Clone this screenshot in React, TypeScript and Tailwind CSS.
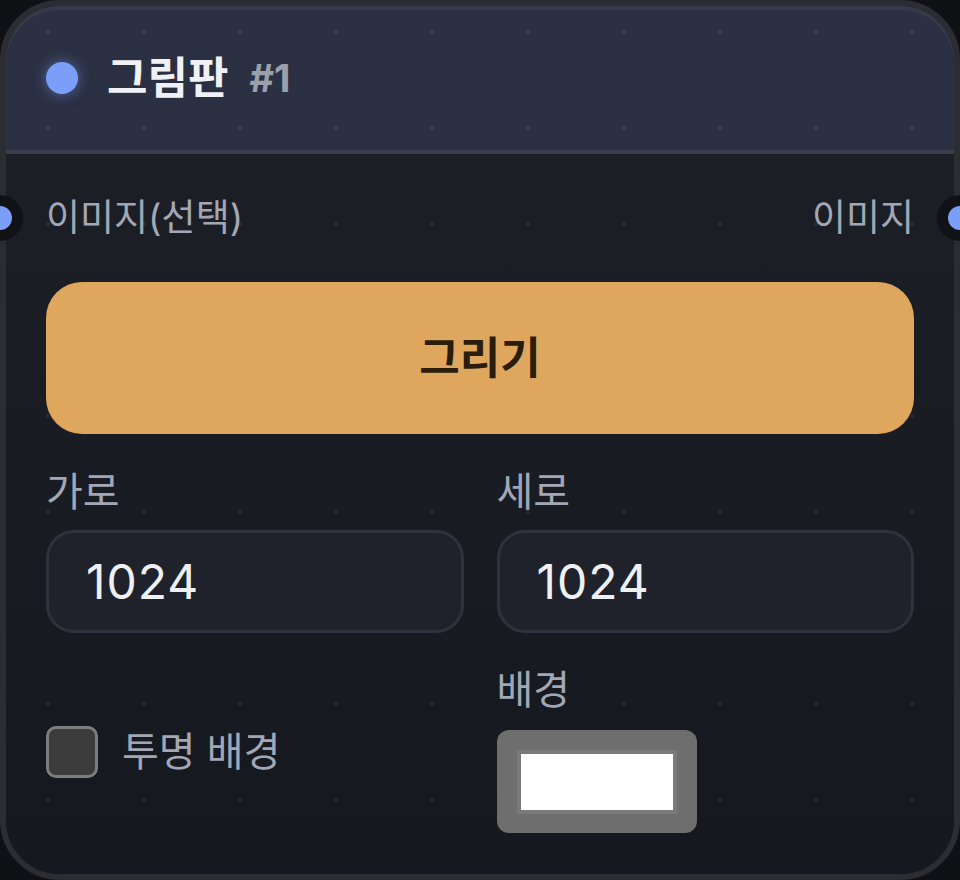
import React from 'react';

const font = "font-['Inter','Noto_Sans_CJK_KR',sans-serif]";

const Handle: React.FC<{ side: 'left' | 'right' }> = ({ side }) => (
  <div
    className={`absolute top-1/2 -translate-y-1/2 w-[46px] h-[46px] rounded-full bg-[#111216] flex items-center justify-center ${
      side === 'left' ? 'left-[-69px]' : 'right-[-69px]'
    }`}
  >
    <div className="w-[24px] h-[24px] rounded-full bg-[#7b9ef8]" />
  </div>
);

const NumberField: React.FC<{ label: string; value: string }> = ({ label, value }) => (
  <div className="flex flex-col">
    <span className="text-[40px] leading-[40px] text-[#a2a7b5]">{label}</span>
    <div className="mt-[18px] h-[103px] rounded-[28px] border-[3px] border-[#2f323c] bg-[#1f222a] flex items-center pl-[37px]">
      <span className="text-[48px] leading-none text-[#eef0f4] tracking-[1px]">{value}</span>
    </div>
  </div>
);

export default function App() {
  return (
    <div className={`w-[960px] h-[880px] bg-[#0f1013] ${font}`}>
      <div className="relative w-full h-full rounded-[60px] border-[6px] border-[#2b2d32] flex flex-col">
        {/* Header */}
        <div className="h-[148px] shrink-0 rounded-t-[54px] border-b-4 border-[#3a3d4e] shadow-[inset_0_4px_0_#363a4b] bg-fixed bg-[image:radial-gradient(circle,rgba(255,255,255,0.07)_2px,transparent_2.6px),linear-gradient(180deg,#2b3043,#282c3c)] bg-size-[96px_96px,100%_100%] bg-position-[0px_-16px,0_0] flex items-center pl-[40px]">
          <div className="w-[32px] h-[32px] rounded-full bg-[#7b9ef8] shadow-[0_0_14px_rgba(123,158,248,0.55)]" />
          <span className="ml-[29px] text-[44px] leading-none font-bold text-[#f0f1f5]">그림판</span>
          <span className="ml-[21px] text-[38px] leading-none font-bold text-[#9ca0ad]">#1</span>
        </div>

        {/* Body */}
        <div className="flex-1 rounded-b-[54px] bg-fixed bg-[image:radial-gradient(circle,rgba(255,255,255,0.06)_2px,transparent_2.6px),linear-gradient(180deg,#1e2027,#16181f)] bg-size-[96px_96px,100%_100%] bg-position-[0px_-16px,0_0] px-[40px] pt-[44px] pb-[41px] flex flex-col">
          <div className="relative flex justify-between items-center h-[40px] text-[37px] leading-[40px] text-[#a2a7b5]">
            <Handle side="left" />
            <span>이미지(선택)</span>
            <span>이미지</span>
            <Handle side="right" />
          </div>

          <button className="mt-[44px] h-[152px] rounded-[36px] bg-[#dfa75e] text-[44px] leading-none font-bold text-[#2b1d0c]">
            그리기
          </button>

          <div className="mt-[38px] grid grid-cols-2 gap-x-[33px]">
            <NumberField label="가로" value="1024" />
            <NumberField label="세로" value="1024" />
          </div>

          <div className="mt-[37px] grid grid-cols-2 gap-x-[33px]">
            <label className="flex items-center gap-[24px]">
              <span className="w-[52px] h-[52px] rounded-[10px] border-[3px] border-[#7d7d7d] bg-[#3b3b3b]" />
              <span className="text-[40px] leading-[40px] text-[#a2a7b5]">투명 배경</span>
            </label>
            <div className="flex flex-col">
              <span className="text-[40px] leading-[40px] text-[#a2a7b5]">배경</span>
              <div className="mt-[20px] w-[200px] h-[103px] rounded-[12px] bg-[#6e6e6e] flex items-center justify-center">
                <div className="w-[160px] h-[64px] border-4 border-[#7a7a7a] bg-white" />
              </div>
            </div>
          </div>
        </div>
      </div>
    </div>
  );
}
